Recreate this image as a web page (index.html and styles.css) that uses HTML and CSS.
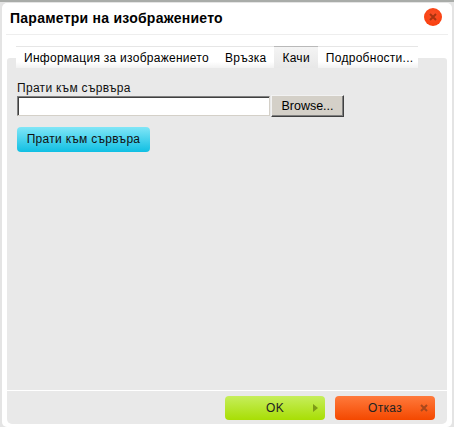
FILE: index.html
```html
<!DOCTYPE html>
<html lang="bg">
<head>
    <meta charset="UTF-8">
    <title>Параметри на изображението</title>
    <link rel="stylesheet" href="styles.css">
</head>
<body>
    <div class="dialog">
        <div class="title-bar">
            <h1>Параметри на изображението</h1>
            <a class="close-btn" href="#">
                <svg width="8" height="8" viewBox="0 0 8 8"><path d="M1 1L7 7M7 1L1 7" stroke="#a8330f" stroke-width="2"/></svg>
            </a>
        </div>
        <div class="contents">
            <div class="tabs">
                <a class="tab" href="#">Информация за изображението</a>
                <a class="tab" href="#">Връзка</a>
                <a class="tab active" href="#">Качи</a>
                <a class="tab" href="#">Подробности...</a>
            </div>
            <div class="panel">
                <div class="tab-body">
                    <label class="field-label">Прати към сървъра</label>
                    <div class="file-row">
                        <input class="file-input" type="text">
                        <button class="browse-btn" type="button">Browse...</button>
                    </div>
                    <a class="send-btn" href="#">Прати към сървъра</a>
                </div>
                <div class="footer">
                    <a class="btn btn-ok" href="#">OK
                        <svg class="btn-icon" width="5" height="8" viewBox="0 0 5 8"><path d="M0 0L5 4L0 8Z" fill="#7d9a16"/></svg>
                    </a>
                    <a class="btn btn-cancel" href="#">Отказ
                        <svg class="btn-icon" width="8" height="8" viewBox="0 0 8 8"><path d="M1 1L7 7M7 1L1 7" stroke="#a8481c" stroke-width="2"/></svg>
                    </a>
                </div>
            </div>
        </div>
    </div>
</body>
</html>
```

FILE: styles.css
```css
html, body {
    height: 100%;
    margin: 0;
    padding: 0;
}
body {
    font-family: "Liberation Sans", Arial, sans-serif;
    background-color: #e4e4e4;
    border-top: 2px solid #a9aca9;
    box-sizing: border-box;
    overflow: hidden;
}
.dialog {
    margin: 1px 2px 0 2px;
    height: 424px;
    box-sizing: border-box;
    background-color: white;
    border-radius: 5px;
    display: flex;
    flex-direction: column;
}
.title-bar {
    display: flex;
    justify-content: space-between;
    align-items: center;
    height: 31px;
    margin: 0 4px 0 4px;
    border-bottom: 1px solid #eeeeee;
}
.title-bar h1 {
    margin: 0 0 1px 4px;
    font-size: 14px;
    font-weight: bold;
    letter-spacing: 0.25px;
    color: black;
}
.close-btn {
    width: 18px;
    height: 18px;
    margin: 0 6px 3px 0;
    border-radius: 50%;
    background: radial-gradient(circle at 50% 40%, #f8512a, #fb3a05);
    display: flex;
    align-items: center;
    justify-content: center;
}
.contents {
    flex: 1;
    margin: 11px 5px 3px 5px;
    display: flex;
    flex-direction: column;
    min-height: 0;
}
.tabs {
    display: flex;
    margin-left: 9px;
    width: 402px;
    height: 22px;
    margin-bottom: -10px;
    border-top: 1px solid #e6e6e6;
    box-sizing: border-box;
    background: linear-gradient(white 70%, #f2f2f2);
    position: relative;
}
.tab {
    font-size: 12px;
    line-height: 22px;
    height: 21px;
    padding: 0 8px;
    color: black;
    text-decoration: none;
    letter-spacing: 0.27px;
    white-space: nowrap;
}
.tab.active {
    background: linear-gradient(#f4f4f4, #e8e8e8);
    border-top: 1px solid #b9b9b9;
    margin-top: -1px;
}
.panel {
    flex: 1;
    background-color: #e9e9e9;
    border-radius: 3px 3px 5px 5px;
    display: flex;
    flex-direction: column;
}
.tab-body {
    flex: 1;
    padding: 23px 10px 0 10px;
}
.field-label {
    display: block;
    font-size: 12px;
    line-height: 14px;
    letter-spacing: 0.3px;
    color: #111;
}
.file-row {
    display: flex;
    align-items: center;
    gap: 1px;
}
.file-input {
    width: 253px;
    height: 20px;
    box-sizing: border-box;
    padding: 0;
    border: 1px solid;
    border-color: #808080 #d4d0c8 #d4d0c8 #808080;
    box-shadow: inset 1px 1px 0 #404040;
    background-color: white;
}
.browse-btn {
    width: 73px;
    height: 22px;
    padding: 0;
    font-family: "Liberation Sans", Arial, sans-serif;
    font-size: 12.5px;
    color: black;
    background-color: #d4d0c8;
    border: 1px solid;
    border-color: #f2f2f2 #404040 #404040 #f2f2f2;
    box-shadow: inset -1px -1px 0 #808080;
}
.send-btn {
    display: block;
    width: 133px;
    height: 25px;
    margin-top: 10px;
    border-radius: 4px;
    background: linear-gradient(#80e6f7, #10bfe3);
    font-size: 12px;
    line-height: 25px;
    letter-spacing: 0.3px;
    text-align: center;
    color: #111;
    text-decoration: none;
}
.footer {
    display: flex;
    justify-content: flex-end;
    gap: 10px;
    height: 34px;
    padding: 5px 12px 0 0;
    box-sizing: border-box;
    border-top: 1px solid white;
}
.btn {
    position: relative;
    width: 100px;
    height: 24px;
    border-radius: 4px;
    font-size: 12px;
    line-height: 24px;
    letter-spacing: 0.3px;
    text-align: center;
    color: #222;
    text-decoration: none;
}
.btn-ok {
    background: linear-gradient(#c6ee5c, #a8de04);
}
.btn-cancel {
    background: linear-gradient(#ff7a3c, #f44800);
}
.btn-icon {
    position: absolute;
    right: 7px;
    top: 8px;
}
```
